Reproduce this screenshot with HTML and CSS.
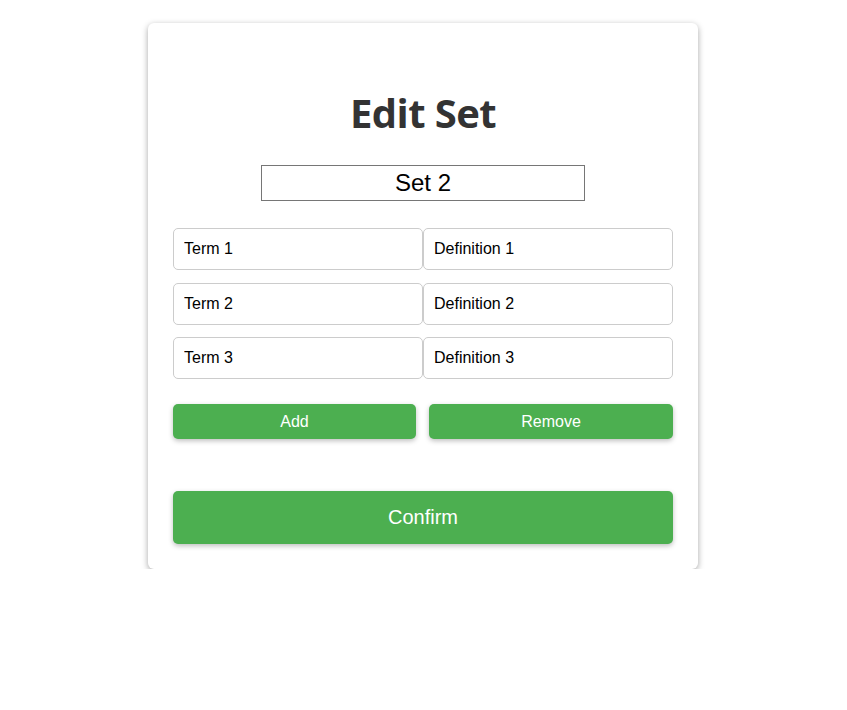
FILE: index.html
```html
<!DOCTYPE html>
<html>
<head>
<meta charset="utf-8">
<link rel="stylesheet" href="styles.css">
</head>
<body>
<div class="card">
  <h1 class="title">Edit Set</h1>
  <div class="name-row"><input class="set-name" type="text" value="Set 2"></div>
  <div class="pairs">
    <input class="field" type="text" value="Term 1"><input class="field" type="text" value="Definition 1">
    <input class="field" type="text" value="Term 2"><input class="field" type="text" value="Definition 2">
    <input class="field" type="text" value="Term 3"><input class="field" type="text" value="Definition 3">
  </div>
  <div class="actions">
    <button class="btn">Add</button>
    <button class="btn">Remove</button>
  </div>
  <button class="btn confirm">Confirm</button>
</div>
</body>
</html>
```
FILE: styles.css
```css
html, body {
  margin: 0;
  padding: 0;
  background: #fff;
  font-family: "Liberation Sans", Arial, sans-serif;
}
body {
  padding-top: 23px;
  padding-right: 1px;
}
.card {
  width: 550px;
  box-sizing: border-box;
  margin: 0 auto;
  padding: 60px 25px 25px;
  background: #fff;
  border-radius: 6px;
  box-shadow: 0 2px 6px rgba(0,0,0,0.35);
}
.title {
  margin: 0;
  text-align: center;
  font-family: "Open Sans", sans-serif;
  font-weight: 700;
  font-size: 40px;
  line-height: 60px;
  color: #333;
  letter-spacing: -0.6px;
}
.name-row {
  display: flex;
  justify-content: center;
  margin-top: 22px;
}
.set-name {
  width: 324px;
  height: 36px;
  box-sizing: border-box;
  border: 1px solid #767676;
  border-radius: 0;
  padding: 0;
  text-align: center;
  font-family: "Liberation Sans", Arial, sans-serif;
  font-size: 24px;
  color: #000;
}
.pairs {
  display: grid;
  grid-template-columns: 250px 250px;
  row-gap: 12.5px;
  margin-top: 27px;
}
.field {
  height: 42px;
  box-sizing: border-box;
  border: 1px solid #ccc;
  border-radius: 5px;
  padding: 0 10px;
  font-family: "Liberation Sans", Arial, sans-serif;
  font-size: 16px;
  color: #000;
}
.actions {
  display: grid;
  grid-template-columns: 243px 244px;
  column-gap: 13px;
  margin-top: 25px;
}
.btn {
  height: 35px;
  border: none;
  border-radius: 5px;
  background: #4caf50;
  color: #fff;
  font-family: "Liberation Sans", Arial, sans-serif;
  font-size: 16px;
  box-shadow: 0 2px 5px rgba(0,0,0,0.25);
  cursor: pointer;
}
.confirm {
  display: block;
  width: 100%;
  height: 53px;
  margin-top: 52px;
  font-size: 20px;
}
```
